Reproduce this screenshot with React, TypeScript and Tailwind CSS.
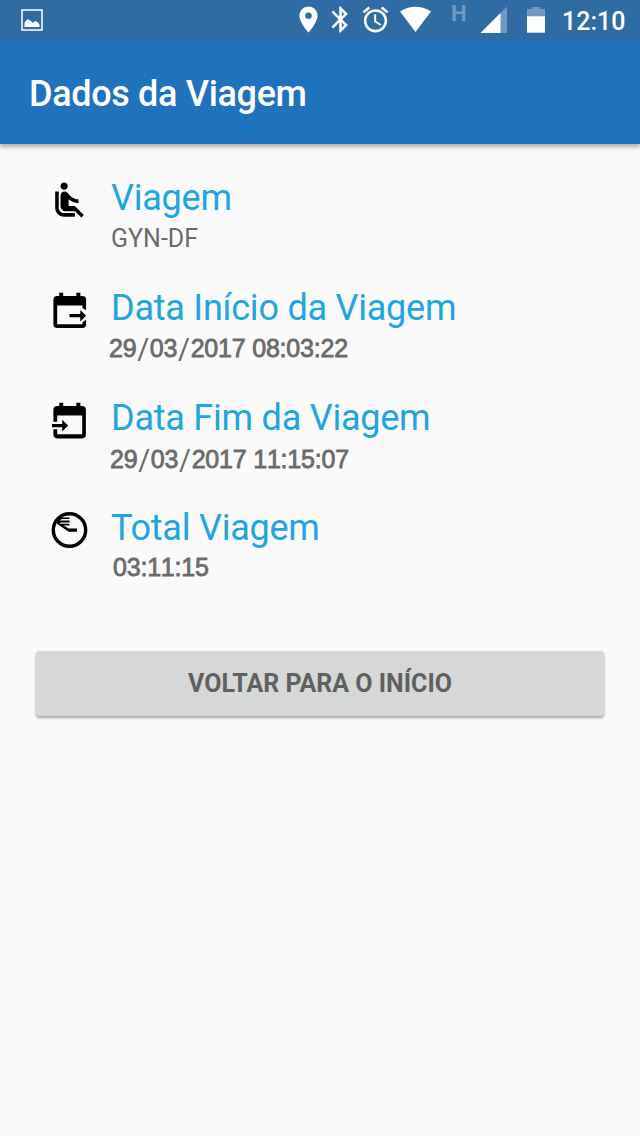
import React from 'react';
import {
  MdAccessAlarm,
  MdAirlineSeatReclineNormal,
  MdBluetooth,
  MdLocationOn,
} from 'react-icons/md';

interface TripField {
  label: string;
  value: string;
  icon: React.ReactNode;
  valueClass: string;
}

const StartIcon = () => (
  <svg className="w-[60px] h-[60px]" viewBox="0 0 60 60">
    <path d="M19.2 12.7h4v3.4h13.2v-3.4h4v3.4h2.1a3.6 3.6 0 0 1 3.6 3.6v10.6l-3.6-2.4v-2.4H17.2v18.8h25.3v-2l3.6-2.6v4.5a3.8 3.8 0 0 1-3.8 3.8H17.2a3.8 3.8 0 0 1-3.8-3.8V19.9a3.8 3.8 0 0 1 3.8-3.8h2z" />
    <path d="M29.5 34.1h10.8v-4.2l5.8 5.8-5.8 5.7v-4.1H29.5z" />
  </svg>
);

const EndIcon = () => (
  <svg className="w-[60px] h-[60px]" viewBox="0 0 60 60">
    <path d="M19.2 12.7h4v3.4h13.2v-3.4h4v3.4h1.7a3.8 3.8 0 0 1 3.8 3.8v24.7a3.8 3.8 0 0 1-3.8 3.8H17.2a3.8 3.8 0 0 1-3.8-3.8v-5.3h3.8v5h25V25.5h-25v6.3h-3.8V19.9a3.8 3.8 0 0 1 3.8-3.8h2z" />
    <path d="M12 33.9h10.2v-4.2l5.9 5.9-5.9 5.9v-4.2H12z" />
  </svg>
);

const TotalIcon = () => (
  <svg className="w-[60px] h-[60px]" viewBox="0 0 60 60">
    <circle cx="29.5" cy="30" r="16.2" fill="none" stroke="black" strokeWidth="3.4" />
    <path d="M20 17.5h9.5v1.6H22l-2.5 1.5h10v2H21l-1.5 1.2h10v1.8h-6.2l5.7 3h8v3.2h-8.4L18 24.5l-2-2z" />
  </svg>
);

const fields: TripField[] = [
  {
    label: 'Viagem',
    value: 'GYN-DF',
    icon: <MdAirlineSeatReclineNormal className="w-[43px] h-[43px] mt-[9px] ml-[8px]" />,
    valueClass: 'mt-px',
  },
  {
    label: 'Data Início da Viagem',
    value: '29/03/2017 08:03:22',
    icon: <StartIcon />,
    valueClass: '-ml-[2px]',
  },
  {
    label: 'Data Fim da Viagem',
    value: '29/03/2017 11:15:07',
    icon: <EndIcon />,
    valueClass: '-ml-px mt-px',
  },
  {
    label: 'Total Viagem',
    value: '03:11:15',
    icon: <TotalIcon />,
    valueClass: 'ml-[2px] -mt-px',
  },
];

// Dates and times are set with taller slashes than the digits
const DateText = ({ value }: { value: string }) => (
  <span className="font-['Liberation_Sans',sans-serif] text-[25px] tracking-[-0.2px] [font-kerning:none] [-webkit-text-stroke:0.8px_#6b6b6b]">
    {value.split(/([/])/).map((part, idx) =>
      part === '/' ? (
        <span
          key={idx}
          className="relative top-[2px] inline-block w-[13.4px] text-center font-['Roboto',sans-serif] text-[29px] leading-[20px] [-webkit-text-stroke:0]"
        >
          /
        </span>
      ) : (
        <span key={idx}>{part}</span>
      )
    )}
  </span>
);

const StatusBar = () => (
  <div className="flex h-[41px] bg-[#2f6ca3] text-white">
    <svg className="w-[22px] h-[22px] mt-[9px] ml-[21px]" viewBox="0 0 22 22">
      <rect x="1" y="1" width="20" height="20" fill="none" stroke="white" strokeWidth="1.5" />
      <path d="M3.5 18v-4.5l3-3.3 2.8 1.4 2.4 2.2 2.5-1.8 2.8 1.6 1.5 2V18z" fill="white" />
    </svg>
    <div className="flex ml-auto">
      <MdLocationOn className="w-[31px] h-[31px] mt-[4px]" />
      <MdBluetooth className="w-[31px] h-[31px] mt-[4px] ml-px" />
      <MdAccessAlarm className="w-[31px] h-[31px] mt-[4px] ml-[4px]" />
      <svg className="w-[32px] h-[26px] mt-[6px] ml-[9px]" viewBox="0 0 32 26">
        <path d="M0 5.5C9 -1 22 -1 31 5.5L15.5 26z" fill="white" />
      </svg>
      <span className="w-[16px] ml-[19px] mt-[3px] text-[22px] leading-[22px] font-bold text-[#6f9ac1]">H</span>
      <svg className="w-[27px] h-[27px] mt-[6px] ml-[13px]" viewBox="0 0 27 27">
        <path d="M0.5 27 27 0.5V27z" fill="#6f9ac1" />
        <path d="M0.5 27 20.5 7v20z" fill="white" />
      </svg>
      <svg className="w-[18px] h-[26px] mt-[7px] ml-[20px]" viewBox="0 0 18 26">
        <path d="M0 2h5V0h8v2h5v8H0z" fill="#6f9ac1" />
        <path d="M0 9.3h18v16.4H0z" fill="white" />
      </svg>
      <span className="ml-[17px] w-[78px] mt-[6px] text-[25px] leading-[32px] font-medium whitespace-nowrap">12:10</span>
    </div>
  </div>
);

const App: React.FC = () => {
  return (
    <div className="min-h-screen bg-[#fafafa] font-['Roboto',sans-serif]">
      <StatusBar />

      <header className="flex items-center h-[103px] pt-[2px] pl-[29px] bg-[#1f73bd] shadow-[0_3px_4px_rgba(0,0,0,0.3)]">
        <h1 className="text-[36px] leading-[42px] tracking-[-0.33px] font-medium text-white">Dados da Viagem</h1>
      </header>

      <main className="pt-[34px]">
        {fields.map((field) => (
          <div key={field.label} className="flex h-[110px]">
            <div className="w-[71px] pl-[40px] -mt-[8px] shrink-0">
              {field.icon}
            </div>
            <div className="pl-[40px]">
              <h2 className="text-[36px] leading-[40px] tracking-[-0.23px] text-[#21a5e0] whitespace-nowrap">
                {field.label}
              </h2>
              <div className="pt-[5px]">
                <p className={`text-[25px] leading-[30px] text-[#6b6b6b] whitespace-nowrap ${field.valueClass}`}>
                  {field.value.includes(':') ? <DateText value={field.value} /> : field.value}
                </p>
              </div>
            </div>
          </div>
        ))}

        <div className="px-[36px] pt-[33px]">
          <button className="block w-full h-[65px] pt-px rounded-[3px] bg-[#d6d8d7] text-[25px] font-bold text-[#5f6160] shadow-[0_2px_3px_rgba(0,0,0,0.35)]">
            VOLTAR PARA O INÍCIO
          </button>
        </div>
      </main>
    </div>
  );
};

export default App;
